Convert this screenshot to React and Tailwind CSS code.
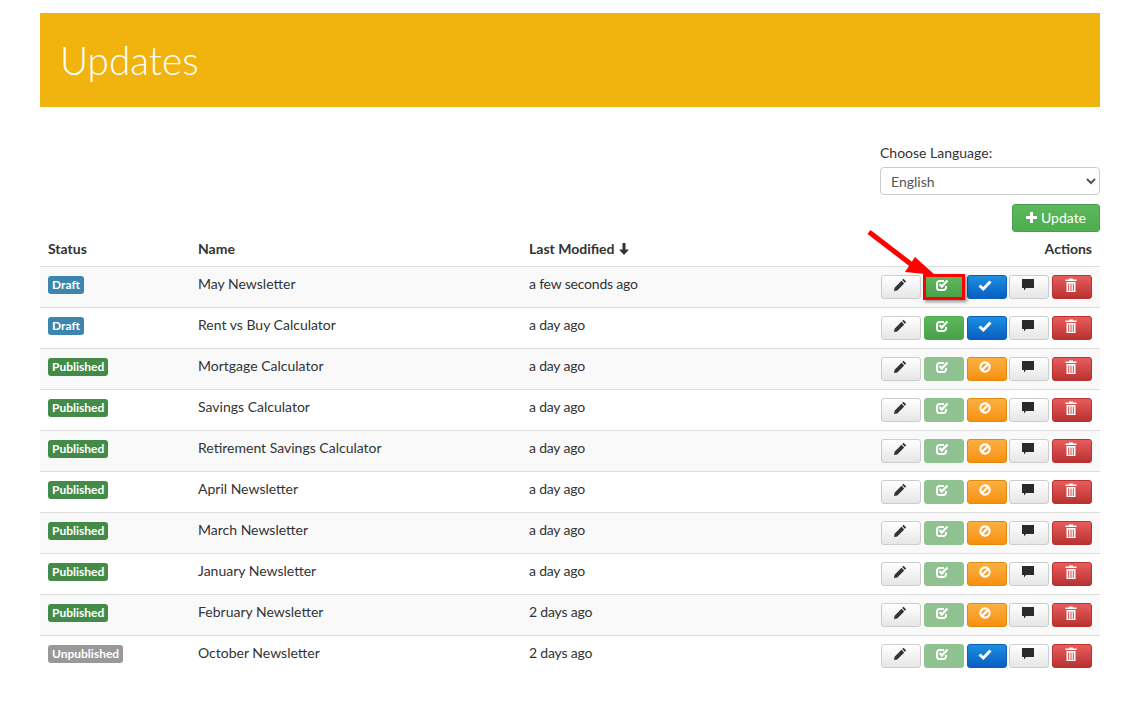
const rows = [
  { status: "Draft", name: "May Newsletter", modified: "a few seconds ago", toggle: "publish", highlight: true },
  { status: "Draft", name: "Rent vs Buy Calculator", modified: "a day ago", toggle: "publish" },
  { status: "Published", name: "Mortgage Calculator", modified: "a day ago", toggle: "ban", faded: true },
  { status: "Published", name: "Savings Calculator", modified: "a day ago", toggle: "ban", faded: true },
  { status: "Published", name: "Retirement Savings Calculator", modified: "a day ago", toggle: "ban", faded: true },
  { status: "Published", name: "April Newsletter", modified: "a day ago", toggle: "ban", faded: true },
  { status: "Published", name: "March Newsletter", modified: "a day ago", toggle: "ban", faded: true },
  { status: "Published", name: "January Newsletter", modified: "a day ago", toggle: "ban", faded: true },
  { status: "Published", name: "February Newsletter", modified: "2 days ago", toggle: "ban", faded: true },
  { status: "Unpublished", name: "October Newsletter", modified: "2 days ago", toggle: "publish", faded: true },
];

const badgeColors = {
  Draft: "bg-[#3c86ad]",
  Published: "bg-[#448b48]",
  Unpublished: "bg-[#999999]",
};

const PencilIcon = () => (
  <svg width="14" height="14" viewBox="0 0 14 14" fill="#333">
    <path d="M10.5 .8 13.200 3.500 11.900 4.800 9.200 2.100Z" />
    <path d="M8.500 2.800 11.200 5.500 4.300 12.400 1 13 1.600 9.700Z" />
  </svg>
);

const CheckBoxIcon = () => (
  <svg width="14" height="14" viewBox="0 0 14 14" fill="none" stroke="#fff">
    <path d="M11 8v1.500A2.500 2.500 0 0 1 8.500 12h-4A2.500 2.500 0 0 1 2 9.500v-4A2.500 2.500 0 0 1 4.500 3H9" strokeWidth="2" />
    <path d="M4.500 6 6.800 8.500 12.500 2.500" strokeWidth="2.400" />
  </svg>
);

const OkIcon = () => (
  <svg width="14" height="14" viewBox="0 0 14 14" fill="none" stroke="#fff" strokeWidth="3">
    <path d="M1.500 7.500 5.300 11 12.500 3.500" />
  </svg>
);

const BanIcon = () => (
  <svg width="14" height="14" viewBox="0 0 14 14" fill="none" stroke="#fff" strokeWidth="2.200">
    <circle cx="7" cy="7" r="4.600" />
    <path d="M3.500 10.500 10.500 3.500" />
  </svg>
);

const CommentIcon = () => (
  <svg width="14" height="14" viewBox="0 0 14 14" fill="#2b2b2b">
    <path d="M1 1h12v9H5L3 12.500V10H1Z" />
  </svg>
);

const TrashIcon = () => (
  <svg width="14" height="15" viewBox="0 0 14 15" fill="#fff">
    <path d="M5 .5h4v1h3.500v1.500h-11V1.500H5Z" />
    <path d="M2.500 4h9v10h-9ZM4.200 5.500v7.500h1V5.500ZM6.500 5.500v7.500h1V5.500ZM8.800 5.500v7.500h1V5.500Z" fillRule="evenodd" />
  </svg>
);

const ActionButton = ({ className, children }) => (
  <button className={`flex h-[24px] w-10 items-center justify-center rounded-[3px] border pb-[3px] pr-[3px] ${className}`}>
    {children}
  </button>
);

const neutral = "border-[#cccccc] bg-gradient-to-b from-white to-[#e6e6e6]";

export default function App() {
  return (
    <div className="relative min-h-[719px] bg-white pl-10 pr-[47px] pt-[13px] font-['Lato','Liberation_Sans',sans-serif] text-[14px] text-[#333333]">
      <header className="flex h-[94px] items-center bg-[#f1b40f] px-5">
        <h1 className="text-[38.700px] font-light leading-none text-white">Updates</h1>
      </header>

      <div className="ml-auto mt-[36px] w-[220px]">
        <label className="block text-[14px] leading-[20px]">Choose Language:</label>
        <select className="mt-[4px] block h-[28px] w-full rounded border border-[#cccccc] bg-white px-[6px] text-[14px] text-[#555555]">
          <option>English</option>
        </select>
      </div>

      <div className="mt-[9px] flex justify-end">
        <button className="flex h-[28px] w-[88px] items-center justify-center gap-1 rounded-[3px] border border-[#4a9d4e] bg-gradient-to-b from-[#5cb85c] to-[#4cae4c] pb-[1px] text-[14px] text-white">
          <svg width="11" height="11" viewBox="0 0 11 11" fill="#fff">
            <path d="M4 0h3v4h4v3H7v4H4V7H0V4h4Z" />
          </svg>
          Update
        </button>
      </div>

      <table className="w-full table-fixed border-collapse">
        <thead>
          <tr className="h-[34px] border-b border-[#dddddd] text-left font-bold">
            <th className="w-[150px] px-2 font-bold">Status</th>
            <th className="w-[331px] px-2 font-bold">Name</th>
            <th className="w-[300px] px-2 font-bold">
              <span className="flex items-center gap-1">
                Last Modified
                <svg width="10" height="12" viewBox="0 0 10 12" fill="#333">
                  <path d="M3.500 0h3v6.500H10L5 12 0 6.500h3.500Z" />
                </svg>
              </span>
            </th>
            <th className="px-2 text-right font-bold">Actions</th>
          </tr>
        </thead>
        <tbody>
          {rows.map((row, i) => (
            <tr key={row.name} className={`h-[41px] border-b border-[#dddddd] last:border-b-0 ${i % 2 === 0 ? "bg-[#f9f9f9]" : "bg-white"}`}>
              <td className="px-2 pb-[6px]">
                <span className={`inline-block rounded-[3px] px-[4px] py-[2px] text-[12px] font-bold leading-[14px] text-white ${badgeColors[row.status]}`}>
                  {row.status}
                </span>
              </td>
              <td className="px-2 pb-[7px]">{row.name}</td>
              <td className="px-2 pb-[7px] tracking-[-0.2px]">{row.modified}</td>
              <td className="px-2">
                <div className="flex justify-end gap-[2.750px]">
                  <ActionButton className={neutral}><PencilIcon /></ActionButton>
                  <div className="relative">
                    <ActionButton className={row.faded ? "border-[#8fc28f] bg-[#8fc290]" : "border-[#4cae4c] bg-gradient-to-b from-[#5cb85c] to-[#4aa04a]"}>
                      <CheckBoxIcon />
                    </ActionButton>
                    {row.highlight && (
                      <div className="absolute -inset-x-[1px] -inset-y-[1px] border-[3px] border-[#ff0000] shadow-[2px_2px_3px_rgba(0,0,0,0.4)]" />
                    )}
                  </div>
                  {row.toggle === "publish" ? (
                    <ActionButton className="border-[#0d5fb8] bg-gradient-to-b from-[#1d8fe0] to-[#0b5ec2]"><OkIcon /></ActionButton>
                  ) : (
                    <ActionButton className="border-[#e08a10] bg-gradient-to-b from-[#fbb040] to-[#f79008]"><BanIcon /></ActionButton>
                  )}
                  <ActionButton className={neutral}><CommentIcon /></ActionButton>
                  <ActionButton className="border-[#b93232] bg-gradient-to-b from-[#e85c5c] to-[#b93232]"><TrashIcon /></ActionButton>
                </div>
              </td>
            </tr>
          ))}
        </tbody>
      </table>

      {/* annotation arrow */}
      <svg className="absolute left-[860px] top-[225px]" width="80" height="60" viewBox="0 0 80 60">
        <path d="M9 7 L56 43" stroke="#ff0000" strokeWidth="5" fill="none" />
        <path d="M75 50 L45 47 L55 32Z" fill="#ff0000" />
      </svg>
    </div>
  );
}
